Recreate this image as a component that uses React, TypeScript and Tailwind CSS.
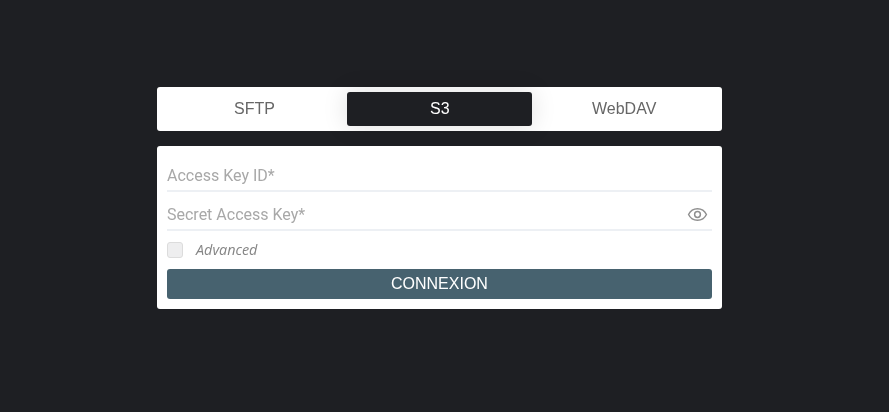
import React from "react";

function Eye() {
  return (
    <svg className="mr-[4px] mb-[2px]" width="21" height="21" viewBox="0 0 24 24" fill="none" stroke="#8f8f8f" strokeWidth="1.7">
      <path d="M1.8 12C3.9 7.7 7.5 5.4 12 5.4s8.1 2.3 10.2 6.6c-2.1 4.3-5.7 6.6-10.2 6.6S3.9 16.3 1.8 12z" />
      <circle cx="12" cy="12" r="3.3" />
    </svg>
  );
}

function T({ children, className = "" }: { children: React.ReactNode; className?: string }) {
  return <span className={"inline-block will-change-transform " + className}>{children}</span>;
}

export default function App() {
  return (
    <div className="min-h-[412px] bg-[#1e1f23] pr-[10px] flex flex-col items-center pt-[87px] font-['Liberation_Sans',sans-serif]">
      <div className="w-[565px] h-[44px] bg-white rounded-[3px] p-[5px] flex">
        <button className="w-[185px] h-[34px] text-[16px] text-[#666666]"><T>SFTP</T></button>
        <button className="w-[185px] h-[34px] text-[16px] text-white bg-[#1e1f23] rounded-[3px] shadow-[0_0_24px_rgba(0,0,0,0.13)]"><T>S3</T></button>
        <button className="w-[185px] h-[34px] text-[16px] text-[#666666]"><T>WebDAV</T></button>
      </div>
      <div className="w-[565px] h-[163px] mt-[15px] bg-white rounded-[3px] px-[10px] flex flex-col">
        <div className="h-[46px] pt-[16px] border-b-2 border-[#edf0f4] flex items-center font-['Roboto',sans-serif] text-[16px] text-[#a8a8a8]">
          <T>Access Key ID*</T>
        </div>
        <div className="h-[39px] pt-[9px] border-b-2 border-[#edf0f4] flex items-center justify-between font-['Roboto',sans-serif] text-[16px] text-[#a8a8a8]">
          <T>Secret Access Key*</T>
          <Eye />
        </div>
        <div className="h-[38px] flex items-center">
          <span className="w-[16px] h-[16px] bg-[#eeeeef] border border-[#dcdcdc] rounded-[3px]" />
          <T className="ml-[13px] mb-[1px] font-['Open_Sans',sans-serif] italic text-[14.4px] text-[#858585]">Advanced</T>
        </div>
        <button className="h-[30px] bg-[#47626f] text-white text-[16px] rounded-[3px]"><T>CONNEXION</T></button>
      </div>
    </div>
  );
}
